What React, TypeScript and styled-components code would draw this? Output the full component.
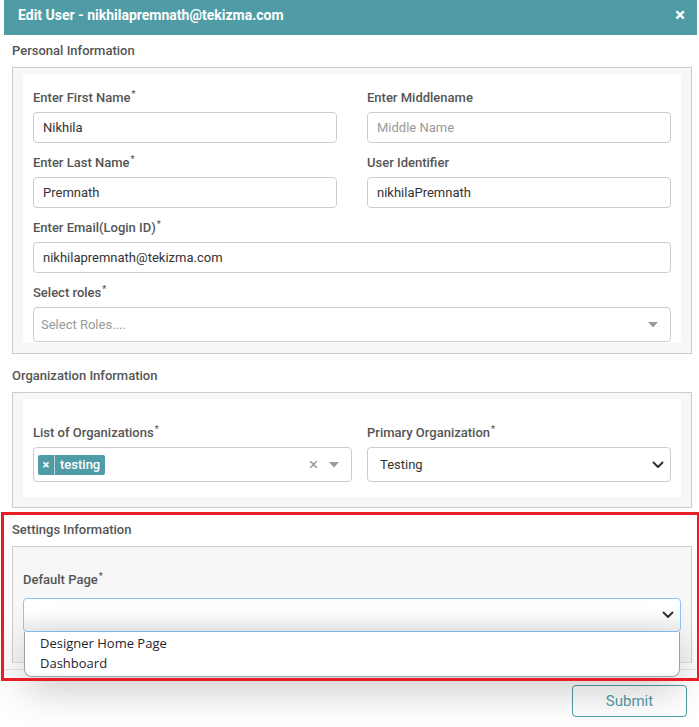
import styled, { createGlobalStyle } from "styled-components";

const TEAL = "#4f9ca6";

const GlobalStyle = createGlobalStyle`
  html, body {
    margin: 0;
    padding: 0;
    background: #ffffff;
  }
  body {
    font-family: Roboto, "Liberation Sans", Arial, sans-serif;
  }
  * {
    box-sizing: border-box;
  }
`;

interface FieldData {
  label: string;
  required?: boolean;
  value?: string;
  placeholder?: string;
  wide?: boolean;
}

const personalFields: FieldData[] = [
  { label: "Enter First Name", required: true, value: "Nikhila" },
  { label: "Enter Middlename", placeholder: "Middle Name" },
  { label: "Enter Last Name", required: true, value: "Premnath" },
  { label: "User Identifier", value: "nikhilaPremnath" },
  {
    label: "Enter Email(Login ID)",
    required: true,
    value: "nikhilapremnath@tekizma.com",
    wide: true,
  },
];

const defaultPages = ["Designer Home Page", "Dashboard"];

function Chevron() {
  return (
    <svg width="12" height="8" viewBox="0 0 12 8">
      <path
        d="M1.5 1.5 L6 6 L10.5 1.5"
        fill="none"
        stroke="#333"
        strokeWidth="2"
        strokeLinecap="round"
        strokeLinejoin="round"
      />
    </svg>
  );
}

function Caret() {
  return (
    <svg width="10" height="6" viewBox="0 0 10 6">
      <path d="M0 0 H10 L5 5.5 Z" fill="#999" />
    </svg>
  );
}

function FieldLabel({ text, required }: { text: string; required?: boolean }) {
  return (
    <Label>
      {text}
      {required && <Star>*</Star>}
    </Label>
  );
}

function EditUser() {
  return (
    <Modal>
      <GlobalStyle />
      <Header>
        <HeaderTitle>Edit User - nikhilapremnath@tekizma.com</HeaderTitle>
        <CloseButton>×</CloseButton>
      </Header>

      <Body>
        <SectionTitle>Personal Information</SectionTitle>
        <Fieldset>
          <Card $top={15} $bottom={1}>
            <FieldGrid>
              {personalFields.map(f => (
                <Field key={f.label} $wide={f.wide}>
                  <FieldLabel text={f.label} required={f.required} />
                  <Input>
                    {f.value ? f.value : <Placeholder>{f.placeholder}</Placeholder>}
                  </Input>
                </Field>
              ))}
              <Field $wide>
                <FieldLabel text="Select roles" required />
                <SelectBox>
                  <Placeholder>Select Roles....</Placeholder>
                  <Indicators>
                    <Caret />
                  </Indicators>
                </SelectBox>
              </Field>
            </FieldGrid>
          </Card>
        </Fieldset>

        <SectionTitle>Organization Information</SectionTitle>
        <Fieldset>
          <Card $top={25} $bottom={15}>
            <OrgGrid>
              <Field>
                <FieldLabel text="List of Organizations" required />
                <SelectBox $pad={4}>
                  <Tag>
                    <TagRemove>×</TagRemove>
                    <TagText>testing</TagText>
                  </Tag>
                  <Indicators>
                    <ClearIcon>×</ClearIcon>
                    <Caret />
                  </Indicators>
                </SelectBox>
              </Field>
              <Field>
                <FieldLabel text="Primary Organization" required />
                <NativeSelect>
                  <span>Testing</span>
                  <Chevron />
                </NativeSelect>
              </Field>
            </OrgGrid>
          </Card>
        </Fieldset>

        <SettingsSection>
          <SectionTitle>Settings Information</SectionTitle>
          <SettingsBox>
            <Field $gap={9}>
              <FieldLabel text="Default Page" required />
              <DropdownWrap>
                <NativeSelect $focused>
                  <span />
                  <Chevron />
                </NativeSelect>
                <OptionList>
                  {defaultPages.map(p => (
                    <OptionItem key={p}>{p}</OptionItem>
                  ))}
                </OptionList>
              </DropdownWrap>
            </Field>
          </SettingsBox>
        </SettingsSection>
      </Body>

      <Footer>
        <SubmitButton>Submit</SubmitButton>
      </Footer>
    </Modal>
  );
}

const Modal = styled.div`
  width: 693px;
  margin-left: 4px;
  background: #ffffff;
`;

const Header = styled.div`
  height: 35px;
  background: ${TEAL};
  display: flex;
  align-items: flex-start;
  justify-content: space-between;
  padding: 6px 12px 0 14px;
`;

const HeaderTitle = styled.div`
  color: #ffffff;
  font-size: 14px;
  font-weight: 700;
  line-height: 18px;
`;

const CloseButton = styled.div`
  color: #ffffff;
  font-size: 19px;
  font-weight: 700;
  line-height: 18px;
`;

const Body = styled.div`
  padding: 0 5px 6px 8px;
`;

const SectionTitle = styled.div`
  color: #555555;
  font-size: 13px;
  font-weight: 500;
  line-height: 18px;
  padding: 7px 0 7px;
`;

const Fieldset = styled.div`
  width: 680px;
  border: 1px solid #cccccc;
  background: #f7f7f7;
  padding: 6px 10px 10px;
  margin-bottom: 6px;
`;

const Card = styled.div<{ $top: number; $bottom: number }>`
  background: #ffffff;
  padding: ${p => p.$top}px 10px ${p => p.$bottom}px;
`;

const FieldGrid = styled.div`
  display: grid;
  grid-template-columns: 304px 304px;
  column-gap: 30px;
  row-gap: 11px;
`;

const OrgGrid = styled.div`
  display: grid;
  grid-template-columns: 319px 304px;
  column-gap: 15px;
`;

const Field = styled.div<{ $wide?: boolean; $gap?: number }>`
  display: flex;
  flex-direction: column;
  gap: ${p => p.$gap ?? 5}px;
  grid-column: ${p => (p.$wide ? "1 / -1" : "auto")};
`;

const Label = styled.label`
  color: #555555;
  font-size: 13px;
  font-weight: 500;
  line-height: 18px;
`;

const Star = styled.sup`
  font-size: 9px;
  line-height: 0;
  margin-left: 1px;
`;

const Input = styled.div`
  height: 31px;
  border: 1px solid #cccccc;
  border-radius: 4px;
  background: #ffffff;
  padding: 0 9px;
  display: flex;
  align-items: center;
  color: #333333;
  font-size: 13px;
`;

const Placeholder = styled.span`
  color: #999999;
`;

const SelectBox = styled.div<{ $pad?: number }>`
  height: 35px;
  border: 1px solid #cccccc;
  border-radius: 4px;
  background: #ffffff;
  padding: 0 12px 0 ${p => p.$pad ?? 7}px;
  display: flex;
  align-items: center;
  justify-content: space-between;
  font-size: 13px;
`;

const Indicators = styled.div`
  display: flex;
  align-items: center;
  gap: 11px;
`;

const ClearIcon = styled.span`
  color: #999999;
  font-size: 17px;
  line-height: 1;
`;

const Tag = styled.div`
  display: flex;
  align-items: stretch;
  height: 20px;
  background: ${TEAL};
  border-radius: 2px;
  color: #ffffff;
`;

const TagRemove = styled.span`
  width: 17px;
  display: flex;
  align-items: center;
  justify-content: center;
  font-size: 13px;
  font-weight: 700;
  border-right: 1px solid rgba(255, 255, 255, 0.6);
`;

const TagText = styled.span`
  padding: 0 5px 0 5px;
  display: flex;
  align-items: center;
  font-size: 13px;
  font-weight: 500;
`;

const NativeSelect = styled.div<{ $focused?: boolean }>`
  height: ${p => (p.$focused ? 34 : 35)}px;
  border: 1px solid ${p => (p.$focused ? "#8cc2f5" : "#cccccc")};
  border-radius: 4px;
  background: ${p =>
    p.$focused ? "linear-gradient(#ffffff 40%, #f0f0f0)" : "#ffffff"};
  padding: 0 6px 0 12px;
  display: flex;
  align-items: center;
  justify-content: space-between;
  color: #333333;
  font-size: 13px;
`;

const SettingsSection = styled.div`
  position: relative;

  &::after {
    content: "";
    position: absolute;
    top: -2px;
    left: -11px;
    right: -8px;
    bottom: -18px;
    border: 3px solid #e81c23;
    pointer-events: none;
    z-index: 3;
  }
`;

const SettingsBox = styled.div`
  width: 680px;
  border: 1px solid #cccccc;
  border-bottom-color: #e0e0e0;
  background: #f7f7f7;
  padding: 24px 10px 30px;
`;

const DropdownWrap = styled.div`
  position: relative;
`;

const OptionList = styled.div`
  position: absolute;
  top: 34px;
  left: 1px;
  right: 1px;
  z-index: 2;
  background: #ffffff;
  border: 1px solid #a0a0a0;
  border-top: none;
  border-radius: 0 0 8px 8px;
  padding: 1px 0 3px;
  box-shadow: 0 12px 40px rgba(0, 0, 0, 0.22);
`;

const OptionItem = styled.div`
  padding-left: 15px;
  color: #1f2430;
  font-family: "Open Sans", "Noto Sans", sans-serif;
  font-size: 13px;
  line-height: 20px;
`;

const Footer = styled.div`
  border-top: 1px solid #e5e5e5;
  padding: 15px 10px 10px;
  display: flex;
  justify-content: flex-end;
`;

const SubmitButton = styled.button`
  width: 115px;
  height: 32px;
  border: 1px solid ${TEAL};
  border-radius: 4px;
  background: transparent;
  color: ${TEAL};
  font-family: Roboto, "Liberation Sans", sans-serif;
  font-size: 15px;
`;

export default EditUser;
